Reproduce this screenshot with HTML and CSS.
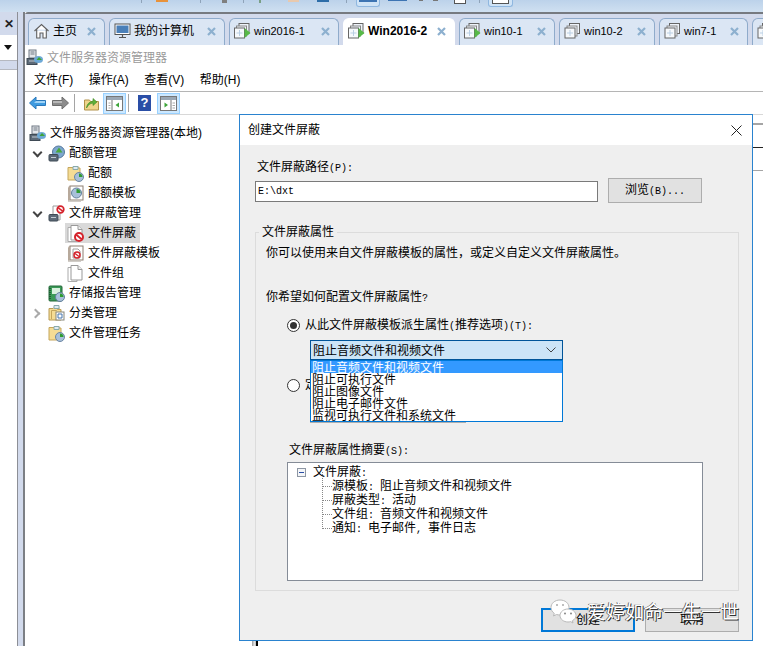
FILE: index.html
```html
<!DOCTYPE html>
<html lang="zh-CN">
<head>
<meta charset="utf-8">
<title>文件服务器资源管理器</title>
<link rel="stylesheet" href="styles.css">
</head>
<body>
<svg class="sprite" aria-hidden="true">
  <symbol id="i-close" viewBox="0 0 9 9"><path d="M1 1l7 7M8 1L1 8" fill="none" stroke="#8db0cf" stroke-width="2.2"/></symbol>
  <symbol id="i-home" viewBox="0 0 16 16"><path d="M1 8l7-6.500L15 8M3.200 6.500V15h3.300v-5h3v5h3.300V6.500" fill="#fff" stroke="#5f5f5f" stroke-width="1.100"/></symbol>
  <symbol id="i-monitor" viewBox="0 0 16 16"><rect x=".5" y="1" width="15" height="10.500" fill="#fff" stroke="#555"/><rect x="2" y="2.500" width="12" height="7.500" fill="#4a7fb8"/><path d="M8 11.500V14M4.500 14.500h7" stroke="#555" stroke-width="1.200"/></symbol>
  <symbol id="i-vm" viewBox="0 0 16 16"><rect x="5" y=".5" width="10" height="10" fill="#eef3f9" stroke="#666"/><rect x="2.500" y="3" width="10" height="10" fill="#eef3f9" stroke="#888"/><rect x=".5" y="5" width="10" height="10" fill="#f6f9fc" stroke="#666"/><path d="M5.500 7v6M2.500 10h6" stroke="#b9cfe4"/></symbol>
  <symbol id="i-vmrun" viewBox="0 0 17 16"><use href="#i-vm" width="16" height="16"/><path d="M10.500 5l6 5-6 5z" fill="#57b947"/></symbol>
  <symbol id="i-server" viewBox="0 0 17 17"><rect x="3" y="1" width="7" height="8" fill="#e4e6ea" stroke="#6f7883"/><path d="M4.500 3h4M4.500 5h4" stroke="#6f7883"/><rect x="1" y="9.500" width="10" height="6" fill="#5d6a78" stroke="#3f4a55"/><path d="M3 12h6" stroke="#c4ccd4"/><ellipse cx="12.500" cy="10.500" rx="4.500" ry="3.500" fill="#6ea9d6"/><path d="M10.500 11l2.500-3 3 3z" fill="#3fa535"/></symbol>
  <symbol id="i-quota" viewBox="0 0 17 17"><circle cx="10.500" cy="7" r="6" fill="#7da7cf" stroke="#54769a"/><path d="M7.500 7.500l3.500-5 3.500 5z" fill="#49a83c"/><rect x="1" y="9.500" width="9" height="6.500" rx="1" fill="#5d6a78" stroke="#3f4a55"/><path d="M3 12.500h5" stroke="#c4ccd4"/></symbol>
  <symbol id="i-foldclock" viewBox="0 0 17 17"><path d="M1 15V2.500h5l1-1h4v1.500h2v12z" fill="#f5dc94" stroke="#c5a65c"/><path d="M6 1.500h5v3H6z" fill="#dfe9f2" stroke="#8aa"/><circle cx="12" cy="12" r="4.500" fill="#a8c0da" stroke="#6c86a3"/><path d="M12 12V8.500A3.500 3.500 0 0 1 15.500 12z" fill="#2f9b32"/></symbol>
  <symbol id="i-tplclock" viewBox="0 0 17 17"><rect x="3" y="1" width="13" height="14" fill="#fff" stroke="#8d7f72"/><path d="M1 16l2-1V1H2L1 3z" fill="#b7a99b"/><path d="M1 16h13" stroke="#c2bdb6" stroke-width="1.500"/><circle cx="9.500" cy="8" r="5" fill="#a8c0da" stroke="#64809c"/><path d="M9.500 8V4a4 4 0 0 1 4 4z" fill="#2f9b32"/></symbol>
  <symbol id="i-screenmgr" viewBox="0 0 17 17"><path d="M5 1h7v14H5z" fill="#fff" stroke="#9a9a9a"/><circle cx="12.500" cy="4.500" r="3.300" fill="#fff" stroke="#d5232c" stroke-width="1.700"/><path d="M10.300 2.800l4.400 3.400" stroke="#d5232c" stroke-width="1.500"/><rect x="1" y="9.500" width="9" height="6.500" rx="1" fill="#5d6a78" stroke="#3f4a55"/><path d="M3 12.500h5" stroke="#c4ccd4"/></symbol>
  <symbol id="i-pages" viewBox="0 0 17 17"><path d="M1 2.500h9v14H1z" fill="#fff" stroke="#aaa"/><path d="M4 .5h7l4 4V15H4z" fill="#fff" stroke="#999"/><path d="M11 .5v4h4" fill="#eee" stroke="#999"/></symbol>
  <symbol id="i-screen" viewBox="0 0 17 17"><use href="#i-pages" width="17" height="17"/><circle cx="12" cy="12" r="4" fill="#fff" stroke="#d5232c" stroke-width="2"/><path d="M9.300 9.800l5.400 4.400" stroke="#d5232c" stroke-width="2"/></symbol>
  <symbol id="i-tplscreen" viewBox="0 0 17 17"><rect x="3" y="1" width="13" height="14" fill="#fff" stroke="#8d7f72"/><path d="M1 16l2-1V1H2L1 3z" fill="#b7a99b"/><path d="M1 16h13" stroke="#c2bdb6" stroke-width="1.500"/><path d="M6 4h5l2 2v7H6z" fill="#fff" stroke="#a0a0a0"/><circle cx="10" cy="10" r="3" fill="#fff" stroke="#d5232c" stroke-width="1.500"/><path d="M8 8.500l4 3" stroke="#d5232c" stroke-width="1.300"/></symbol>
  <symbol id="i-report" viewBox="0 0 17 17"><rect x="1" y="1" width="13" height="15" rx="1" fill="#3b9a57" stroke="#24683a"/><rect x="4" y="3" width="8" height="6" fill="#d8f0dd"/><path d="M2 3v12" stroke="#1b4d2b" stroke-width="1.500" stroke-dasharray="1 1"/><circle cx="12" cy="12" r="4.500" fill="#a8c0da" stroke="#64809c"/><path d="M12 12V8.500A3.500 3.500 0 0 1 15.500 12z" fill="#2f9b32"/></symbol>
  <symbol id="i-classify" viewBox="0 0 17 17"><path d="M1 15V3.500h4l1-1h5v2h2v10.500z" fill="#f5dc94" stroke="#b89a55"/><path d="M3.500 14V5.500h5l1-1h3" fill="none" stroke="#c5a65c"/><path d="M6 .5h5v3H6z" fill="#dfe9f2" stroke="#8aa"/><rect x="8" y="7" width="8" height="8" fill="#fff" stroke="#85857a"/><path d="M10 9h4v4h-4z" fill="none" stroke="#4474ad"/></symbol>
  <symbol id="i-back" viewBox="0 0 17 14"><path d="M.5 7L7 1v3.500h9.500v5H7V13z" fill="#3f9be0" stroke="#2a78bb"/><path d="M7 5h9v2H5z" fill="#9fd3f6"/></symbol>
  <symbol id="i-fwd" viewBox="0 0 17 14"><path d="M16.500 7L10 1v3.500H.5v5H10V13z" fill="#8c8c8c" stroke="#6d6d6d"/><path d="M1 5h9v2H1z" fill="#b8b8b8"/></symbol>
  <symbol id="i-upfolder" viewBox="0 0 15 15"><path d="M.5 14V4h5l1 1.500h8V14z" fill="#efd58c" stroke="#b2924a"/><path d="M2.500 12c.5-4 2.500-6 6.500-7V2.500l4 3.500-4 3.500V7c-3 .5-5 2-6.500 5z" fill="#5fb03a" stroke="#3f8a25" stroke-width=".6"/></symbol>
  <symbol id="i-paneleft" viewBox="0 0 17 15"><rect x=".5" y=".5" width="16" height="14" fill="#fff" stroke="#777"/><rect x="1" y="1" width="15" height="3" fill="#9aa7b4"/><path d="M6 4v10.500" stroke="#777"/><path d="M2.500 7h2M2.500 9.500h2M2.500 12h2" stroke="#a8a8a8"/><path d="M13 6.500v5l-3.500-2.500z" fill="#3ea53a"/></symbol>
  <symbol id="i-paneright" viewBox="0 0 17 15"><rect x=".5" y=".5" width="16" height="14" fill="#fff" stroke="#777"/><rect x="1" y="1" width="15" height="3" fill="#9aa7b4"/><path d="M11 4v10.500" stroke="#777"/><path d="M12.500 7h2.500M12.500 9.500h2.500M12.500 12h2.500" stroke="#a8a8a8"/><path d="M4.500 6.500v5L8 9z" fill="#3ea53a"/></symbol>
  <symbol id="i-wechat" viewBox="0 0 27 27"><path d="M10 1C4.800 1 1 4.300 1 8.500c0 2.400 1.300 4.500 3.300 5.900L3.500 17l3-1.500c1 .3 2.300.5 3.500.5 5.200 0 9-3.300 9-7.500S15.200 1 10 1z" fill="#fff" stroke="#b9b9b9"/><path d="M18 10c-4.400 0-8 2.900-8 6.500s3.600 6.500 8 6.500c.9 0 1.800-.1 2.600-.4L23 24l-.6-2.300c2.200-1.200 3.600-3 3.600-5.200 0-3.600-3.600-6.500-8-6.500z" fill="#fff" stroke="#b9b9b9"/><circle cx="7" cy="6" r="1" fill="#aaa"/><circle cx="13" cy="6" r="1" fill="#aaa"/><circle cx="15" cy="14.500" r="1" fill="#888"/><circle cx="21" cy="14.500" r="1" fill="#888"/></symbol>
</svg>

<div class="app">
  <div class="topbar">
    <i class="tick tick-a"></i><i class="chip chip-orange"></i><i class="tick tick-b"></i><i class="chip chip-gray"></i><i class="tick tick-c"></i><i class="chip chip-green"></i><i class="chip chip-peach"></i><i class="chip chip-blue"></i><i class="tick tick-d"></i>
    <span class="tophl tophl-a"><i class="topline"></i></span><i class="chip chip-blue2"></i><i class="chip chip-gray2"></i><i class="chip chip-gray3"></i><i class="topbox"></i><i class="tick tick-e"></i>
    <span class="tophl tophl-b"><i class="topbox topbox-in"></i></span>
  </div>

  <div class="shell">
    <aside class="rail">
      <div class="rail-col">
        <div class="rail-close">✕</div>
        <div class="rail-combo"><i class="caret"></i></div>
        <div class="rail-list"></div>
      </div>
    </aside>

    <main class="main">
      <nav class="tabs">
        <div class="tab"><svg class="tab-icon"><use href="#i-home"/></svg><span class="tab-label">主页</span><svg class="tab-x"><use href="#i-close"/></svg></div>
        <div class="tab"><svg class="tab-icon"><use href="#i-monitor"/></svg><span class="tab-label">我的计算机</span><svg class="tab-x"><use href="#i-close"/></svg></div>
        <div class="tab"><svg class="tab-icon"><use href="#i-vmrun"/></svg><span class="tab-label tab-latin">win2016-1</span><svg class="tab-x"><use href="#i-close"/></svg></div>
        <div class="tab tab-active"><svg class="tab-icon"><use href="#i-vmrun"/></svg><span class="tab-label">Win2016-2</span><svg class="tab-x"><use href="#i-close"/></svg></div>
        <div class="tab"><svg class="tab-icon"><use href="#i-vmrun"/></svg><span class="tab-label tab-latin">win10-1</span><svg class="tab-x"><use href="#i-close"/></svg></div>
        <div class="tab"><svg class="tab-icon"><use href="#i-vm"/></svg><span class="tab-label tab-latin">win10-2</span><svg class="tab-x"><use href="#i-close"/></svg></div>
        <div class="tab"><svg class="tab-icon"><use href="#i-vm"/></svg><span class="tab-label tab-latin">win7-1</span><svg class="tab-x"><use href="#i-close"/></svg></div>
        <div class="tab"><svg class="tab-icon"><use href="#i-vm"/></svg></div>
      </nav>

      <div class="mmc-title"><svg class="ico"><use href="#i-server"/></svg><span>文件服务器资源管理器</span></div>
      <div class="menubar"><span>文件(F)</span><span>操作(A)</span><span>查看(V)</span><span>帮助(H)</span></div>
      <div class="toolbar">
        <svg class="tool-arrow"><use href="#i-back"/></svg>
        <svg class="tool-arrow"><use href="#i-fwd"/></svg>
        <i class="tool-sep"></i>
        <svg class="tool-up"><use href="#i-upfolder"/></svg>
        <span class="tool-btn"><svg class="tool-pane"><use href="#i-paneleft"/></svg></span>
        <i class="tool-sep tool-sep-b"></i>
        <span class="tool-help">?</span>
        <span class="tool-btn tool-btn-b"><svg class="tool-pane"><use href="#i-paneright"/></svg></span>
      </div>

      <div class="panes">
        <ul class="tree">
          <li class="node lv0"><span class="node-in"><svg class="ico"><use href="#i-server"/></svg>文件服务器资源管理器(本地)</span></li>
          <li class="node lv1"><i class="chev chev-open"></i><span class="node-in"><svg class="ico"><use href="#i-quota"/></svg>配额管理</span></li>
          <li class="node lv2"><span class="node-in"><svg class="ico"><use href="#i-foldclock"/></svg>配额</span></li>
          <li class="node lv2"><span class="node-in"><svg class="ico"><use href="#i-tplclock"/></svg>配额模板</span></li>
          <li class="node lv1"><i class="chev chev-open"></i><span class="node-in"><svg class="ico"><use href="#i-screenmgr"/></svg>文件屏蔽管理</span></li>
          <li class="node lv2"><span class="node-in node-sel"><svg class="ico"><use href="#i-screen"/></svg>文件屏蔽</span></li>
          <li class="node lv2"><span class="node-in"><svg class="ico"><use href="#i-tplscreen"/></svg>文件屏蔽模板</span></li>
          <li class="node lv2"><span class="node-in"><svg class="ico"><use href="#i-pages"/></svg>文件组</span></li>
          <li class="node lv1"><i class="chev"></i><span class="node-in"><svg class="ico"><use href="#i-report"/></svg>存储报告管理</span></li>
          <li class="node lv1"><i class="chev chev-closed"></i><span class="node-in"><svg class="ico"><use href="#i-classify"/></svg>分类管理</span></li>
          <li class="node lv1"><i class="chev"></i><span class="node-in"><svg class="ico"><use href="#i-foldclock"/></svg>文件管理任务</span></li>
        </ul>
        <div class="splitter"></div>
        <div class="detail">
          <div class="detail-head"></div>
          <div class="detail-row"></div>
        </div>
      </div>
    </main>
  </div>

  <section class="dialog">
    <header class="dlg-title"><span>创建文件屏蔽</span><svg class="dlg-x" viewBox="0 0 11 11"><path d="M.5.5l10 10M10.500.5l-10 10" stroke="#222" fill="none"/></svg></header>
    <div class="dlg-body">
      <div class="line path-label">文件屏蔽路径<span class="h">(P):</span></div>
      <div class="path-row">
        <div class="input">E:\dxt</div>
        <div class="btn btn-browse">浏览<span class="h">(B)...</span></div>
      </div>
      <fieldset class="group">
        <legend>文件屏蔽属性</legend>
        <div class="line group-intro">你可以使用来自文件屏蔽模板的属性，或定义自定义文件屏蔽属性。</div>
        <div class="line group-q">你希望如何配置文件屏蔽属性<span class="h">?</span></div>
        <label class="radio-row radio-first"><i class="radio radio-on"></i><span>从此文件屏蔽模板派生属性<span class="h">(</span>推荐选项<span class="h">)(T):</span></span></label>
        <div class="select-wrap">
          <div class="select"><span class="select-text">阻止音频文件和视频文件</span><svg class="select-chev" viewBox="0 0 10 6"><path d="M.5.5L5 5 9.500.5" fill="none" stroke="#444"/></svg></div>
          <ul class="options">
            <li class="opt opt-on">阻止音频文件和视频文件</li>
            <li class="opt">阻止可执行文件</li>
            <li class="opt">阻止图像文件</li>
            <li class="opt">阻止电子邮件文件</li>
            <li class="opt">监视可执行文件和系统文件</li>
          </ul>
        </div>
        <label class="radio-row radio-second"><i class="radio"></i>定义自定义文件屏蔽属性<span class="h">(C):</span></label>
        <div class="btn btn-custom"></div>
        <div class="line summary-label">文件屏蔽属性摘要<span class="h">(S):</span></div>
        <div class="summary">
          <div class="sum-root"><i class="minus"></i><span>文件屏蔽<span class="h">:</span></span></div>
          <ul class="sum-list">
            <li>源模板<span class="h">: </span>阻止音频文件和视频文件</li>
            <li>屏蔽类型<span class="h">: </span>活动</li>
            <li>文件组<span class="h">: </span>音频文件和视频文件</li>
            <li>通知<span class="h">: </span>电子邮件<span class="h">, </span>事件日志</li>
          </ul>
        </div>
      </fieldset>
      <div class="dlg-actions">
        <div class="btn btn-act btn-default">创建</div>
        <div class="btn btn-act">取消</div>
      </div>
    </div>
    <div class="watermark"><svg class="wm-icon"><use href="#i-wechat"/></svg><span>爱婷如命一生一世</span></div>
  </section>
</div>
</body>
</html>
```

FILE: styles.css
```css
* { box-sizing: border-box; }
html, body { margin: 0; height: 100%; overflow: hidden; }
body {
  font: 12px/14px "Liberation Sans", "Noto Sans CJK SC", sans-serif;
  color: #000;
  background: #fff;
}
ul { list-style: none; margin: 0; padding: 0; }
i { display: block; }
.sprite { position: absolute; width: 0; height: 0; }
.h { font: 10px "Liberation Mono", monospace; white-space: pre; }

.app { position: relative; width: 763px; height: 646px; display: flex; flex-direction: column; }

/* top strip */
.topbar {
  height: 12px;
  flex: none;
  display: flex;
  align-items: flex-start;
  background: linear-gradient(#bcd2ea, #cfe0f1);
}
.tick { width: 1px; height: 3px; background: #8fa3b9; }
.tick-a { margin-left: 141px; }
.tick-b { margin-left: 32px; }
.tick-c { margin-left: 16px; }
.tick-d { margin-left: 17px; }
.tick-e { margin-left: 13px; }
.chip { height: 1px; }
.chip-orange { width: 12px; margin-left: 14px; background: #e8923a; height: 2px; }
.chip-gray { width: 5px; margin-left: 21px; height: 3px; background: #7f7f7f; }
.chip-green { width: 2px; margin-left: 15px; height: 3px; background: #7a9f85; }
.chip-peach { width: 11px; margin-left: 27px; height: 2px; background: #e8c9ae; }
.chip-blue { width: 12px; margin-left: 18px; height: 2px; background: #2d6da8; }
.chip-blue2 { width: 19px; margin-left: 8px; height: 1px; background: #3d74b3; }
.chip-gray2 { width: 4px; margin-left: 12px; height: 1px; background: #777; }
.chip-gray3 { width: 5px; margin-left: 10px; height: 1px; background: #777; }
.tophl { height: 7px; display: block; background: #cfe3f6; border: 1px solid #8fb7e0; border-top: 0; border-radius: 0 0 3px 3px; flex: none; }
.tophl-a { width: 24px; margin-left: 9px; }
.tophl-b { width: 25px; margin-left: 8px; padding: 0 3px; }
.topline { height: 2px; background: #3d74b3; margin: 0 2px; }
.topbox { width: 12px; height: 4px; margin-left: 16px; background: #fff; border: 1px solid #555; border-top: 0; }
.topbox-in { width: 100%; margin: 0; }

/* shell */
.shell { flex: 1; min-height: 0; display: flex; }
.rail {
  width: 25px;
  flex: none;
  border-right: 2px solid #7c7f85;
  background: #d2daec;
}
.rail-col { width: 18px; height: 100%; display: flex; flex-direction: column; border-right: 1px solid #8d8f96; background: #d2daec; }
.rail-close { height: 23px; flex: none; font-size: 12px; line-height: 21px; padding-top: 2px; text-align: center; font-weight: 700; color: #222; }
.rail-combo { height: 26px; flex: none; background: #fff; position: relative; display: flex; align-items: center; padding-left: 4px; border-bottom: 1px solid #b5b8c0; }
.caret { width: 0; height: 0; border: 4px solid transparent; border-top: 5px solid #111; border-bottom: 0; margin-left: 0; }
.rail-list { flex: 1; margin-top: 8px; background: #fff; border-top: 1px solid #b5b8c0; }

.main { flex: 1; min-width: 0; display: flex; flex-direction: column; border-top: 2px solid #767a80; border-top-left-radius: 3px; }

/* tabs */
.tabs {
  height: 31px;
  flex: none;
  padding: 4px 0 0 3px;
  display: grid;
  grid-template-columns: 77px 116px 110px 112px 96px 96px 89px 40px;
  column-gap: 4px;
  background: #d2daec;
}
.tab {
  display: flex;
  align-items: center;
  padding: 0 8px 2px 4px;
  background: #dbe6f4;
  border: 1px solid #8fabcb;
  border-bottom: 0;
  border-radius: 6px 6px 0 0;
  font-size: 12px;
  white-space: nowrap;
}
.tab-active { background: #fff; border-color: #fff; font-weight: 700; }
.tab-icon { width: 17px; height: 16px; flex: none; margin-right: 3px; }
.tab-label { flex: 1; min-width: 0; }
.tab-latin { font-size: 11px; }
.tab-x { width: 9px; height: 9px; flex: none; }

/* mmc chrome */
.mmc-title { height: 25px; flex: none; display: flex; align-items: center; padding-left: 1px; color: #9a9a9a; background: #fff; }
.ico { width: 17px; height: 17px; flex: none; margin-right: 4px; }
.menubar { height: 22px; flex: none; display: flex; gap: 15.500px; padding: 0 0 2px 9px; align-items: center; border-bottom: 1px solid #b5b5b5; }
.toolbar { height: 23px; flex: none; display: flex; align-items: center; padding-left: 4px; border-bottom: 1px solid #d8d8d8; }
.tool-arrow { width: 17px; height: 14px; margin-right: 6px; }
.tool-sep { width: 1px; height: 18px; background: #a5a5a5; margin: 0 9px 0 -1px; }
.tool-sep-b { margin: 0 9px 0 2px; }
.tool-up { width: 15px; height: 15px; margin-right: 4px; }
.tool-btn { width: 23px; height: 21px; background: #cce8ff; border: 1px solid #99d1ff; display: flex; align-items: center; justify-content: center; }
.tool-btn-b { margin-left: 6px; }
.tool-pane { width: 17px; height: 15px; }
.tool-help { width: 13px; height: 16px; background: #2a4ea6; color: #fff; font-weight: 700; font-size: 13px; line-height: 16px; text-align: center; }

/* tree */
.panes { flex: 1; min-height: 0; display: flex; }
.tree { width: 227px; flex: none; padding-top: 8px; background: #fff; overflow: hidden; }
.node { height: 20px; display: flex; align-items: center; white-space: nowrap; line-height: 20px; }
.node-in { display: flex; align-items: center; height: 20px; }
.lv0 { padding-left: 4px; }
.lv1 { padding-left: 8px; }
.lv2 { padding-left: 40px; }
.lv2 .node-in { padding: 0 4px 0 2px; }
.node-sel { background: #d9d9d9; }
.chev { width: 9px; height: 9px; margin-right: 6px; flex: none; position: relative; }
.chev-open::before { content: ""; position: absolute; left: 1px; top: 0; width: 5px; height: 5px; border-right: 2px solid #444; border-bottom: 2px solid #444; transform: rotate(45deg); }
.chev-closed::before { content: ""; position: absolute; left: -1px; top: 1px; width: 5px; height: 5px; border-right: 2px solid #aaa; border-top: 2px solid #aaa; transform: rotate(45deg); }
.splitter { width: 6px; flex: none; background: linear-gradient(90deg, #9a9a9a, #e5e5e5 40%, #bcbcbc 65%, #000 70%); }
.detail { flex: 1; min-width: 0; padding-top: 8px; }
.detail-head { height: 25px; border-top: 2px solid #a5a5a5; border-bottom: 1px solid #222; }
.detail-row { height: 23px; border-bottom: 1px solid #a5a5a5; }

/* dialog */
.dialog {
  position: absolute;
  left: 239px;
  top: 114px;
  width: 514px;
  height: 527px;
  border: 1px solid #2a83cf;
  background: #efefef;
  display: flex;
  flex-direction: column;
}
.dlg-title { height: 30px; flex: none; display: flex; align-items: center; justify-content: space-between; padding: 0 10px 0 8px; background: #fff; }
.dlg-x { width: 11px; height: 11px; }
.dlg-body { flex: 1; padding: 15px 0 0 15px; }
.line { white-space: nowrap; }
.path-label { margin-left: 2px; }
.path-row { display: flex; align-items: flex-start; margin-top: 4px; }
.input { width: 343px; height: 21px; margin-top: 3px; background: #fff; border: 1px solid #7a7a7a; padding-left: 2px; font: 10px/19px "Liberation Mono", monospace; }
.btn { background: #e1e1e1; border: 1px solid #adadad; text-align: center; }
.btn-browse { width: 94px; height: 25px; margin-left: 10px; line-height: 23px; }
.group { margin: 22px 0 0; padding: 0; width: 484px; height: 366px; border: 1px solid #dcdcdc; min-width: 0; display: block; }
.group legend { margin-left: 3px; padding: 0 3px; line-height: 14px; }
.group-intro { margin: 7px 0 0 10px; }
.group-q { margin: 30px 0 0 10px; }
.radio-row { display: flex; align-items: center; height: 14px; white-space: nowrap; margin-left: 31px; }
.radio-first { margin-top: 14px; }
.radio-second { margin-top: 18px; }
.radio { width: 13px; height: 13px; flex: none; margin-right: 5px; border-radius: 50%; border: 1px solid #333; background: #fff; position: relative; }
.radio-on::after { content: ""; position: absolute; inset: 2px; border-radius: 50%; background: #333; }
.select-wrap { position: relative; margin: 8px 0 0 54px; width: 253px; }
.select { height: 20px; background: #cce4f7; border: 1px solid #005499; display: flex; align-items: center; justify-content: space-between; padding: 0 6px 0 2px; }
.select-text { padding-top: 1px; }
.select-chev { width: 10px; height: 6px; }
.options { position: absolute; left: 0; top: 100%; width: 100%; height: 62px; background: #fff; border: 1px solid #0078d7; z-index: 2; overflow: hidden; }
.opt { height: 12px; line-height: 14px; padding-left: 1px; white-space: nowrap; }
.opt-on { background: #3399ff; color: #fff; }
.btn-custom { margin: 8px 0 0 54px; width: 156px; height: 23px; }
.summary-label { margin: 20px 0 0 33px; }
.summary { margin: 5px 0 0 31px; width: 416px; height: 119px; background: #fff; border: 1px solid #858c97; padding: 2px 0 0 9px; }
.sum-root { height: 14px; display: flex; align-items: center; }
.minus { width: 9px; height: 9px; flex: none; border: 1px solid #8d96a3; position: relative; margin-right: 7px; background: #f4f6f8; }
.minus::after { content: ""; position: absolute; left: 1px; right: 1px; top: 3px; height: 1px; background: #2a4ea6; }
.sum-list li { height: 14px; line-height: 14px; padding-left: 35px; white-space: nowrap; position: relative; }
.sum-list li::before { content: ""; position: absolute; left: 25px; width: 9px; top: -7px; height: 14px; border-left: 1px dotted #888; border-bottom: 1px dotted #888; }
.dlg-actions { display: flex; justify-content: flex-end; gap: 10px; margin: 17px 13px 0 0; }
.btn-act { width: 94px; height: 24px; line-height: 22px; }
.btn-default { border: 2px solid #0078d7; line-height: 20px; }

/* watermark */
.watermark { position: absolute; left: 310px; top: 484px; display: flex; align-items: center; color: #fff; font-size: 19px; line-height: 24px; white-space: nowrap; text-shadow: 1px 1px 0 #333, -1px 0 0 #666; }
.wm-icon { width: 27px; height: 27px; margin-right: 10px; }
```
